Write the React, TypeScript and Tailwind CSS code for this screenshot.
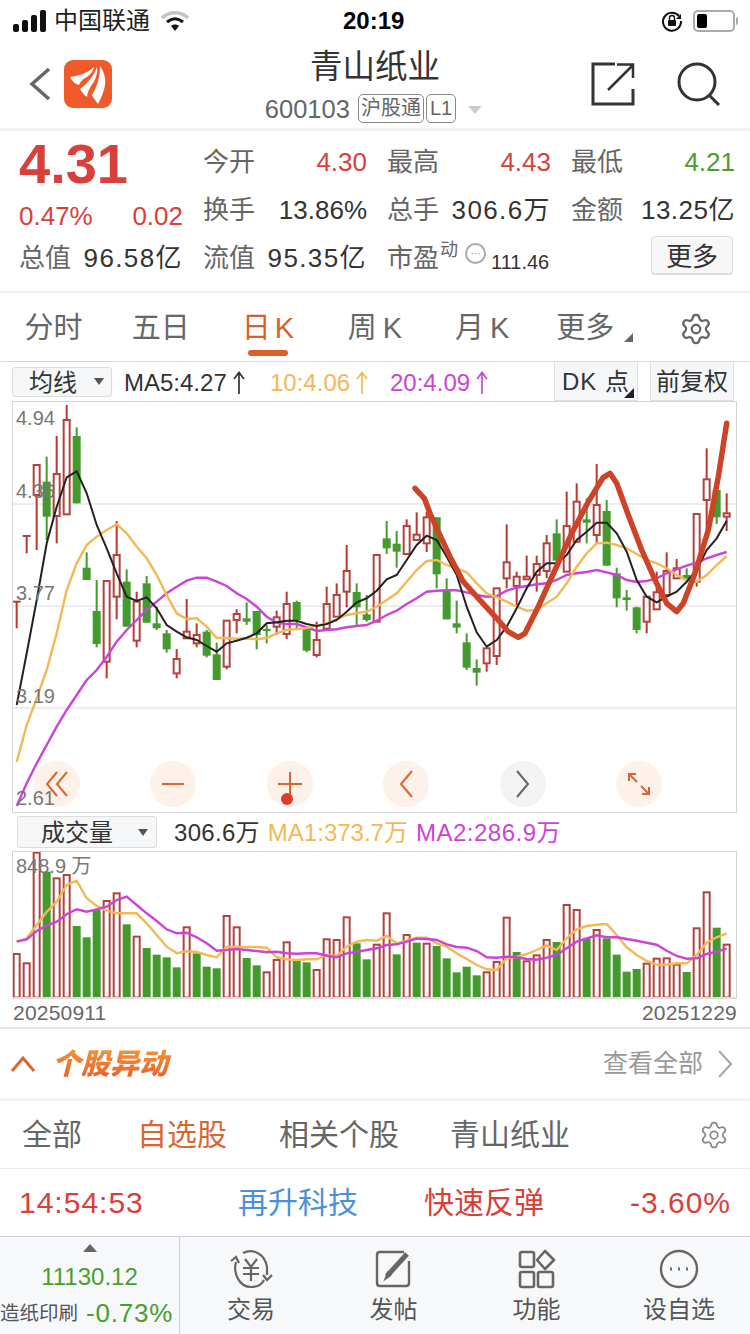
import { Settings } from "lucide-react"

// [green?, wick top, wick bottom, body top, body bottom] - y measured at 3x from y=400
const candles: [number, number, number, number, number][] = [
  [0, 605, 685, 605, 606], [0, 408, 460, 408, 409], [0, 192, 450, 195, 285], [1, 170, 420, 245, 350],
  [0, 108, 430, 222, 348], [0, 15, 345, 60, 343], [1, 82, 310, 108, 310], [1, 457, 540, 503, 540],
  [1, 540, 742, 633, 732], [0, 543, 835, 543, 785], [0, 363, 658, 465, 590], [1, 508, 680, 545, 680],
  [0, 575, 742, 605, 722], [1, 528, 668, 550, 668], [1, 620, 690, 670, 685], [1, 690, 758, 700, 748],
  [0, 747, 835, 777, 820], [0, 597, 715, 695, 715], [0, 670, 742, 705, 730], [1, 690, 772, 695, 767],
  [1, 728, 840, 763, 840], [0, 660, 808, 662, 800], [0, 628, 700, 642, 660], [1, 607, 675, 655, 665],
  [1, 633, 748, 633, 705], [1, 675, 730, 690, 694], [0, 632, 705, 652, 680], [0, 575, 717, 612, 702],
  [1, 602, 685, 606, 660], [1, 680, 757, 682, 752], [0, 665, 772, 720, 765], [0, 560, 690, 612, 686],
  [0, 550, 650, 585, 650], [0, 435, 622, 513, 575], [1, 550, 675, 576, 622], [1, 585, 665, 643, 660],
  [0, 465, 665, 465, 665], [1, 363, 462, 415, 445], [1, 393, 503, 431, 455], [0, 358, 465, 378, 462],
  [0, 337, 423, 404, 420], [0, 335, 456, 352, 430], [1, 352, 565, 352, 523], [1, 535, 658, 570, 658],
  [1, 602, 700, 670, 683], [1, 700, 810, 727, 803], [1, 778, 857, 804, 818], [0, 745, 815, 745, 790],
  [0, 565, 795, 565, 768], [0, 373, 565, 487, 535], [0, 515, 615, 530, 558], [0, 467, 540, 530, 538],
  [0, 467, 575, 492, 525], [0, 405, 535, 430, 513], [1, 358, 490, 400, 482], [0, 275, 515, 378, 515],
  [0, 250, 428, 305, 425], [1, 295, 430, 358, 368], [0, 192, 430, 315, 405], [1, 300, 497, 333, 497],
  [1, 503, 622, 520, 595], [1, 570, 632, 592, 600], [1, 620, 700, 622, 690], [0, 590, 700, 590, 665],
  [0, 515, 630, 577, 628], [0, 457, 590, 513, 585], [0, 477, 535, 505, 535], [1, 505, 545, 525, 540],
  [0, 342, 560, 342, 545], [0, 145, 390, 238, 300], [1, 270, 372, 270, 352], [0, 280, 393, 340, 350],
]

// [green?, top] per day, y at 3x from y=850
const volumes: [number, number][] = [
  [0, 312], [0, 340], [0, 8], [1, 65], [0, 85], [0, 75], [1, 228], [1, 262], [1, 180], [0, 153], [0, 130], [1, 223],
  [0, 260], [1, 294], [1, 314], [1, 322], [1, 352], [0, 232], [1, 310], [1, 350], [1, 355], [0, 198], [0, 232], [1, 324],
  [1, 346], [0, 367], [0, 330], [0, 277], [1, 332], [1, 337], [0, 360], [0, 268], [0, 270], [0, 202], [1, 280], [1, 328],
  [0, 284], [0, 190], [1, 313], [0, 255], [1, 278], [0, 281], [1, 288], [1, 325], [1, 367], [1, 350], [1, 376], [0, 367],
  [0, 336], [0, 203], [1, 306], [0, 334], [0, 316], [0, 270], [1, 276], [0, 165], [0, 180], [1, 265], [0, 240], [1, 265],
  [1, 314], [1, 365], [1, 357], [0, 341], [0, 326], [0, 325], [0, 344], [1, 366], [0, 235], [0, 127], [1, 233], [0, 284],
]

const ma5 = [915, 760, 600, 430, 320, 232, 214, 280, 375, 445, 520, 590, 603, 592, 625, 675, 695, 712, 720, 738, 755, 730, 722, 713, 700, 670, 667, 662, 662, 672, 678, 672, 660, 635, 607, 595, 572, 538, 525, 480, 435, 407, 420, 470, 525, 620, 697, 740, 720, 680, 625, 565, 515, 490, 490, 465, 420, 395, 368, 368, 400, 455, 540, 590, 607, 590, 575, 545, 510, 450, 415, 362]
const ma10 = [1086, 975, 895, 810, 700, 570, 490, 435, 410, 390, 373, 400, 440, 475, 525, 585, 640, 657, 655, 680, 714, 714, 716, 715, 718, 714, 700, 690, 687, 684, 677, 670, 658, 645, 640, 635, 620, 600, 580, 545, 510, 483, 480, 495, 505, 517, 550, 580, 592, 605, 620, 632, 630, 610, 590, 550, 500, 460, 430, 428, 435, 445, 462, 480, 490, 505, 525, 540, 545, 525, 495, 468]
const ma20 = [1218, 1150, 1090, 1035, 980, 930, 885, 840, 810, 770, 725, 690, 660, 630, 605, 580, 560, 542, 533, 533, 545, 558, 580, 597, 620, 650, 668, 672, 672, 682, 693, 690, 688, 682, 678, 675, 662, 645, 632, 612, 595, 575, 572, 571, 571, 577, 585, 590, 588, 572, 563, 558, 553, 550, 540, 525, 520, 516, 510, 517, 525, 540, 546, 543, 535, 520, 508, 497, 488, 475, 465, 456]
const volMa1 = [275, 265, 225, 185, 155, 105, 92, 145, 168, 182, 190, 190, 190, 220, 255, 290, 310, 304, 306, 315, 322, 290, 291, 291, 291, 293, 322, 328, 330, 328, 328, 315, 318, 290, 275, 270, 272, 258, 280, 272, 263, 263, 280, 290, 310, 327, 345, 358, 360, 325, 320, 312, 300, 286, 300, 265, 238, 228, 224, 222, 255, 292, 315, 333, 344, 344, 340, 340, 315, 278, 262, 250]
const volMa2 = [275, 268, 243, 227, 215, 193, 178, 185, 178, 170, 150, 140, 165, 190, 213, 238, 250, 248, 262, 280, 302, 300, 297, 300, 303, 307, 305, 310, 311, 310, 310, 317, 322, 310, 305, 300, 295, 285, 283, 275, 266, 267, 270, 283, 291, 293, 303, 322, 323, 320, 322, 327, 329, 323, 315, 295, 275, 265, 256, 262, 262, 267, 272, 278, 284, 302, 318, 326, 325, 312, 305, 296]

const dayX = (i: number) => 16.67 + i * 10
const line = (ys: number[], top: number) =>
  ys.map((y, i) => `${dayX(i).toFixed(1)},${(top + y / 3).toFixed(1)}`).join(" ")

// the hand drawn stroke over the chart, 3x from (375,400)
const scribble = [[120, 265], [148, 295], [165, 340], [190, 395], [225, 470], [265, 545], [310, 595], [365, 655], [400, 695], [430, 712], [450, 700], [490, 620], [540, 510], [590, 400], [640, 305], [685, 232], [705, 220], [725, 250], [760, 345], [800, 450], [840, 540], [875, 610], [905, 635], [925, 610], [960, 520], [1000, 390], [1030, 230], [1055, 70]]
  .map(([x, y]) => `${(375 + x / 3).toFixed(1)},${(400 + y / 3).toFixed(1)}`)
  .join(" ")

const RED = "#b0433f"
const GREEN = "#459a2e"

const axisLabels = [
  { text: "4.94", pos: "top-[4px]" },
  { text: "4.36", pos: "top-[77px]" },
  { text: "3.77", pos: "top-[179px]" },
  { text: "3.19", pos: "top-[282px]" },
  { text: "2.61", pos: "top-[384px]" },
]

function Chart() {
  return (
    <svg viewBox="13 402 723 410" className="block h-full w-full">
      {[504, 606, 708].map((y) => (
        <line key={y} x1="13" x2="736" y1={y} y2={y} stroke="#e6e6ee" strokeWidth="1.5" />
      ))}
      {candles.map(([green, wt, wb, bt, bb], i) => {
        const x = dayX(i)
        const color = green ? GREEN : RED
        const bodyH = (bb - bt) / 3
        return (
          <g key={i}>
            <line x1={x} x2={x} y1={400 + wt / 3} y2={400 + wb / 3} stroke={green ? GREEN : "#c0342d"} strokeWidth="2" />
            {bodyH < 2 ? (
              <line x1={x - 4} x2={x + 4} y1={400 + bt / 3} y2={400 + bt / 3} stroke={color} strokeWidth="2" />
            ) : (
              <rect
                x={green ? x - 4 : x - 3}
                y={400 + bt / 3}
                width={green ? 8 : 6}
                height={bodyH}
                fill={green ? GREEN : "#ffffff"}
                stroke={green ? "none" : color}
                strokeWidth="2"
              />
            )}
          </g>
        )
      })}
      <polyline points={line(ma20, 400)} fill="none" stroke="#cc44d6" strokeWidth="2.4" />
      <polyline points={line(ma10, 400)} fill="none" stroke="#f2b955" strokeWidth="2.4" />
      <polyline points={line(ma5, 400)} fill="none" stroke="#222222" strokeWidth="2" />
      <polyline points={scribble} fill="none" stroke="#cd4326" strokeWidth="5.5" strokeLinecap="round" strokeLinejoin="round" />
    </svg>
  )
}

function VolumeChart() {
  const base = 997.5
  return (
    <svg viewBox="13 852 723 145" className="block h-full w-full">
      {volumes.map(([green, top], i) => {
        const x = dayX(i)
        const y = 850 + top / 3
        return green ? (
          <rect key={i} x={x - 4} y={y} width="8" height={base - y} fill={GREEN} />
        ) : (
          <rect key={i} x={x - 3} y={y} width="6" height={base - y} fill="#ffffff" stroke={RED} strokeWidth="2" />
        )
      })}
      <polyline points={line(volMa1, 850)} fill="none" stroke="#f2b955" strokeWidth="2.4" />
      <polyline points={line(volMa2, 850)} fill="none" stroke="#cc44d6" strokeWidth="2.4" />
      <text x="16" y="873" fontSize="20" fill="#777777">848.9 万</text>
    </svg>
  )
}

function Stat({ label, value, color = "text-[#333]" }: { label: string; value: string; color?: string }) {
  return (
    <div className="flex items-center justify-between">
      <span className="text-[#666]">{label}</span>
      <span className={color}>{value}</span>
    </div>
  )
}

function ChartButton({ grey, children }: { grey?: boolean; children: React.ReactNode }) {
  return (
    <div className="flex w-[116.5px] justify-center">
      <div className={`relative flex h-[46px] w-[46px] items-center justify-center rounded-full ${grey ? "bg-[#f3f3f3]" : "bg-[#fdf1ea]"}`}>
        {children}
      </div>
    </div>
  )
}

function UpArrow({ color }: { color: string }) {
  return (
    <svg className="ml-[6px]" width="12" height="24" viewBox="0 0 12 24" fill="none" stroke={color} strokeWidth="1.7">
      <path d="M6 2 V23 M1 8 L6 1.5 L11 8" />
    </svg>
  )
}

const ctl = { fill: "none", stroke: "#d9662f", strokeWidth: 2 }

export default function App() {
  return (
    <div className="flex h-[1334px] w-[750px] flex-col overflow-hidden bg-white font-['Liberation_Sans','Noto_Sans_CJK_SC',sans-serif] text-[#333]">
      {/* status bar */}
      <div className="relative flex h-[42px] items-center pl-[13px] pr-[12px] text-black">
        <svg width="34" height="22" viewBox="0 0 34 22" fill="#111">
          <rect x="0" y="14" width="6" height="8" rx="2" />
          <rect x="9" y="10" width="6" height="12" rx="2" />
          <rect x="18" y="5" width="6" height="17" rx="2" />
          <rect x="27" y="0" width="6" height="22" rx="2" />
        </svg>
        <span className="ml-[7px] text-[24px] leading-none text-[#222]">中国联通</span>
        <svg className="ml-[11px]" width="28" height="22" viewBox="0 0 28 22" fill="none">
          <path d="M1 8 C8 1 20 1 27 8" stroke="#c4c4c4" strokeWidth="3.5" />
          <path d="M6 12 C11 8 17 8 22 12" stroke="#111" strokeWidth="3" />
          <path d="M10 16 L14 21 L18 16 C16 14 12 14 10 16Z" fill="#111" />
        </svg>
        <span className="absolute left-[343px] text-[24px] font-bold leading-none">20:19</span>
        <div className="ml-auto flex items-center gap-[10px]">
          <svg width="22" height="22" viewBox="0 0 22 22" fill="none">
            <path d="M18 6 A9 9 0 1 0 20 11" stroke="#111" strokeWidth="2" />
            <path d="M20 4 V9 H15" fill="#111" />
            <rect x="7" y="10" width="8" height="6" rx="1" fill="#111" />
            <path d="M8.5 10 V8 A2.5 2.5 0 0 1 13.5 8 V10" stroke="#111" strokeWidth="1.4" />
          </svg>
          <div className="flex items-center">
            <div className="flex h-[22px] w-[42px] items-center rounded-[5px] border-2 border-[#aaa] p-[2px]">
              <div className="h-full w-[10px] rounded-[2px] bg-black" />
            </div>
            <div className="ml-[1px] h-[8px] w-[2px] rounded-r bg-[#aaa]" />
          </div>
        </div>
      </div>

      {/* nav */}
      <div className="flex h-[86px] items-start">
        <div className="flex w-[165px] items-center pl-[29px] pt-[18px]">
          <svg width="22" height="34" viewBox="0 0 22 34" fill="none">
            <path d="M20 2 L3 17 L20 32" stroke="#666" strokeWidth="3.5" />
          </svg>
          <svg className="ml-[13px]" width="48" height="48" viewBox="0 0 48 48">
            <rect width="48" height="48" rx="9" fill="#ee5a2a" />
            <path d="M6 17 C14 16 24 13 30 7 C29 12 25 16 21 18 C18 20 16 22 15 25 C11 24 8 21 6 17Z" fill="#fff" />
            <path d="M33 7 C34 14 31 21 27 26 C25 30 23 33 23 37 C20 35 17 31 16 29 C23 24 30 16 33 7Z" fill="#fff" />
            <path d="M36 6 C40 12 42 18 41 25 C40 32 37 38 34 44 C32 41 29 38 28 35 C33 27 36 17 36 6Z" fill="#fff" />
          </svg>
        </div>
        <div className="flex flex-1 flex-col items-center pt-[5px]">
          <div className="text-[32.5px] leading-[40px] text-[#333]">青山纸业</div>
          <div className="mr-[3px] mt-[7px] flex items-center text-[#666]">
            <span className="text-[25.5px] leading-[28px]">600103</span>
            <span className="ml-[8px] rounded-[5px] border border-[#888] px-[2px] text-[20px] leading-[27px]">沪股通</span>
            <span className="ml-[2px] rounded-[5px] border border-[#888] px-[3px] text-[20px] leading-[27px]">L1</span>
            <span className="ml-[12px] mt-[3px] h-0 w-0 border-x-[7px] border-t-[8px] border-x-transparent border-t-[#ccc]" />
          </div>
        </div>
        <div className="flex w-[165px] items-center justify-end gap-[42px] pr-[29px] pt-[20px]">
          <svg width="44" height="44" viewBox="0 0 44 44" fill="none" stroke="#333" strokeWidth="3">
            <path d="M42 27 V42 H2 V2 H24" />
            <path d="M17 28 L41 4 M26 2.5 H42 V16" strokeWidth="2.5" />
          </svg>
          <svg width="44" height="44" viewBox="0 0 44 44" fill="none" stroke="#333" strokeWidth="3">
            <circle cx="20" cy="20" r="18" />
            <path d="M32 33 L42 43" />
          </svg>
        </div>
      </div>
      <div className="h-[3px] bg-[#f2f2f2]" />

      {/* quote */}
      <div className="grid h-[160px] grid-cols-[164px_164px_164px_164px] grid-rows-[58px_48px_48px] gap-x-[20px] px-[19px] text-[26px] leading-[34px]">
        <div className="text-[56px] font-bold leading-[66px] text-[#d9403a]">4.31</div>
        <div className="pt-[14px]"><Stat label="今开" value="4.30" color="text-[#d9403a]" /></div>
        <div className="pt-[14px]"><Stat label="最高" value="4.43" color="text-[#d9403a]" /></div>
        <div className="pt-[14px]"><Stat label="最低" value="4.21" color="text-[#4a9e2e]" /></div>
        <div className="flex justify-between pt-[10px] text-[#d9403a]">
          <span>0.47%</span>
          <span>0.02</span>
        </div>
        <div className="pt-[4px]"><Stat label="换手" value="13.86%" /></div>
        <div className="pt-[4px]"><Stat label="总手" value="306.6万" color="text-[#333] tracking-[1.4px]" /></div>
        <div className="pt-[4px]"><Stat label="金额" value="13.25亿" color="text-[#333] tracking-[0.5px]" /></div>
        <div className="pt-[4px]"><Stat label="总值" value="96.58亿" color="text-[#333] tracking-[1.4px]" /></div>
        <div className="pt-[4px]"><Stat label="流值" value="95.35亿" color="text-[#333] tracking-[1.4px]" /></div>
        <div className="flex items-start whitespace-nowrap pt-[4px]">
          <span className="shrink-0 text-[#666]">市盈</span>
          <span className="ml-[1px] shrink-0 -translate-y-[3px] text-[18px] leading-[24px] text-[#666]">动</span>
          <span className="ml-[7px] mt-[2px] flex h-[21px] w-[21px] shrink-0 items-center justify-center rounded-full border-2 border-[#aaa] text-[10px] leading-none text-[#888]">···</span>
          <span className="ml-[5px] mt-[7px] shrink-0 text-[20px] leading-[28px]">111.46</span>
        </div>
        <div className="flex justify-end pr-[2px]">
          <span className="-mt-[1px] flex h-[38px] w-[82px] items-center justify-center rounded-[4px] border border-[#ddd] bg-[#f7f7f8] pt-[3px] text-[26px] shadow-[0_1px_0_#ddd]">更多</span>
        </div>
      </div>
      <div className="h-[2px] bg-[#efefef]" />

      {/* period tabs */}
      <div className="grid h-[69px] grid-cols-7 border-b border-[#d8d8d8] pt-[3px] text-[29px] text-[#666]">
        <div className="flex items-center justify-center">分时</div>
        <div className="flex items-center justify-center">五日</div>
        <div className="relative flex items-center justify-center text-[#d9602a]">
          日<span className="ml-[4px]">K</span>
          <span className="absolute bottom-[5px] left-[34px] h-[6px] w-[40px] rounded-full bg-[#d9602a]" />
        </div>
        <div className="flex items-center justify-center">周<span className="ml-[6px]">K</span></div>
        <div className="flex items-center justify-center">月<span className="ml-[6px]">K</span></div>
        <div className="relative flex items-center justify-center pr-[8px]">
          更多
          <span className="absolute bottom-[19px] right-[10px] h-0 w-0 border-b-[9px] border-l-[9px] border-b-[#666] border-l-transparent" />
        </div>
        <div className="flex items-center justify-center">
          <Settings size={34} strokeWidth={1.6} color="#666" />
        </div>
      </div>

      {/* MA legend */}
      <div className="flex h-[39px] items-center pl-[12px] text-[24px]">
        <div className="flex h-[30px] w-[100px] items-center justify-between rounded-[3px] border border-[#ddd] bg-[#f6f7f9] pl-[16px] pr-[7px]">
          <span className="pt-[2px]">均线</span>
          <span className="h-0 w-0 border-x-[5px] border-t-[7px] border-x-transparent border-t-[#555]" />
        </div>
        <span className="ml-[12px] flex w-[146px] items-center pt-[2px]">MA5:4.27<UpArrow color="#333" /></span>
        <span className="flex w-[120px] items-center pt-[2px] text-[#f2b955]">10:4.06<UpArrow color="#f2b955" /></span>
        <span className="flex items-center pt-[2px] text-[#cc44d6]">20:4.09<UpArrow color="#cc44d6" /></span>
        <div className="ml-auto flex gap-[12px] self-start pr-[16px]">
          <span className="relative flex h-[39px] w-[84px] items-center justify-center border border-t-0 border-[#ddd] bg-[#f6f7f9] pt-[2px] tracking-[1px]">
            DK 点
            <span className="absolute bottom-[2px] right-[3px] h-0 w-0 border-b-[10px] border-l-[10px] border-b-[#222] border-l-transparent" />
          </span>
          <span className="flex h-[39px] w-[84px] items-center justify-center border border-t-0 border-[#ddd] bg-[#f6f7f9] pt-[2px]">前复权</span>
        </div>
      </div>

      {/* candle chart */}
      <div className="relative ml-[12px] h-[412px] w-[725px] border border-[#d4d4d4]">
        <Chart />
        <div className="absolute bottom-[5px] left-[-14.5px] flex">
          <ChartButton>
            <svg width="24" height="28" viewBox="0 0 24 28" {...ctl}><path d="M12 2 L2 14 L12 26 M22 2 L12 14 L22 26" /></svg>
          </ChartButton>
          <ChartButton>
            <svg width="24" height="4" viewBox="0 0 24 4" {...ctl}><path d="M1 2 H23" /></svg>
          </ChartButton>
          <ChartButton>
            <svg width="24" height="24" viewBox="0 0 24 24" {...ctl}><path d="M0 12 H24 M12 0 V24" /></svg>
            <span className="absolute bottom-[2px] left-[14px] h-[12px] w-[12px] rounded-full bg-[#e03b2e]" />
          </ChartButton>
          <ChartButton>
            <svg width="14" height="28" viewBox="0 0 14 28" {...ctl}><path d="M13 1 L2 14 L13 27" /></svg>
          </ChartButton>
          <ChartButton grey>
            <svg width="14" height="28" viewBox="0 0 14 28" fill="none" stroke="#666" strokeWidth="2"><path d="M1 1 L12 14 L1 27" /></svg>
          </ChartButton>
          <ChartButton>
            <svg width="24" height="24" viewBox="0 0 24 24" {...ctl}><path d="M2 9 V2 H9 M2 2 L10 10 M22 15 V22 H15 M22 22 L14 14" /></svg>
          </ChartButton>
        </div>
        {axisLabels.map((l) => (
          <span key={l.text} className={`absolute left-[3px] text-[20px] leading-[24px] text-[#777] ${l.pos}`}>
            {l.text}
          </span>
        ))}
      </div>

      {/* volume legend */}
      <div className="flex h-[38px] items-center pl-[17px] text-[24px]">
        <div className="flex h-[32px] w-[140px] items-center justify-between rounded-[3px] border border-[#ddd] bg-[#f6f7f9] pl-[23px] pr-[8px]">
          <span className="pt-[2px]">成交量</span>
          <span className="h-0 w-0 border-x-[5px] border-t-[7px] border-x-transparent border-t-[#555]" />
        </div>
        <span className="ml-[17px] pt-[2px] tracking-[0.3px]">306.6万</span>
        <span className="ml-[8px] pt-[2px] text-[#f2b955]">MA1:373.7万</span>
        <span className="ml-[8px] pt-[2px] tracking-[0.5px] text-[#cc44d6]">MA2:286.9万</span>
      </div>

      {/* volume chart */}
      <div className="ml-[12px] h-[148px] w-[725px] border border-b-[2px] border-[#d4d4d4] border-b-[#ddd]">
        <VolumeChart />
      </div>
      <div className="flex h-[30px] items-center justify-between border-b-2 border-[#e4e4e4] pl-[13px] pr-[13px] text-[21px] tracking-[0.2px] text-[#666]">
        <span>20250911</span>
        <span>20251229</span>
      </div>

      {/* movement header */}
      <div className="flex h-[69px] items-center pl-[10px] pr-[17px]">
        <svg width="26" height="18" viewBox="0 0 26 18" fill="none" stroke="#d9662f" strokeWidth="3"><path d="M2 16 L13 3 L24 16" /></svg>
        <span className="ml-[16px] bg-gradient-to-b from-[#f59a3a] to-[#e2582a] bg-clip-text pr-[6px] text-[29px] font-black italic leading-[38px] text-transparent">个股异动</span>
        <span className="ml-auto text-[25px] text-[#999]">查看全部</span>
        <svg className="ml-[15px]" width="15" height="30" viewBox="0 0 15 30" fill="none" stroke="#aaa" strokeWidth="2.2"><path d="M1 2 L13 15 L1 28" /></svg>
      </div>
      <div className="h-[3px] bg-[#f2f2f2]" />

      <div className="flex h-[68px] items-center border-b border-[#eee] pl-[22px] pr-[21px] text-[30px] text-[#666]">
        <span>全部</span>
        <span className="ml-[55px] text-[#d9662f]">自选股</span>
        <span className="ml-[52px]">相关个股</span>
        <span className="ml-[51px]">青山纸业</span>
        <Settings className="ml-auto" size={30} strokeWidth={1.4} color="#888" />
      </div>

      <div className="flex h-[67px] items-center pl-[19px] pr-[19px] text-[30px] text-[#d9403a]">
        <span className="w-[219px] tracking-[1px]">14:54:53</span>
        <span className="w-[186px] text-[#4a90d9]">再升科技</span>
        <span>快速反弹</span>
        <span className="ml-auto tracking-[1px]">-3.60%</span>
      </div>

      {/* bottom bar */}
      <div className="flex flex-1 border-t border-[#ccced4] bg-[#f7f8fa] text-[#555]">
        <div className="flex w-[180px] flex-col items-center border-r border-[#ccced4] pt-[7px]">
          <span className="h-0 w-0 border-x-[7px] border-b-[8px] border-x-transparent border-b-[#666]" />
          <span className="mt-[9px] text-[24px] leading-[32px] text-[#4a9e2e]">11130.12</span>
          <div className="mt-[4px] flex w-full items-center whitespace-nowrap leading-[32px]">
            <span className="text-[19.5px] text-[#555]">造纸印刷</span>
            <span className="ml-[8px] text-[26px] tracking-[0.8px] text-[#4a9e2e]">-0.73%</span>
          </div>
        </div>
        <div className="flex flex-1 pt-[12px] text-[24px] leading-[32px]">
          <div className="flex w-[142px] flex-col items-center">
            <svg width="44" height="40" viewBox="0 0 44 40" fill="none" stroke="#666" strokeWidth="2.2">
              <path d="M7 13 C4 24 10 38 22 38 C28 38 33 35 35 31" />
              <path d="M14 4 C24 -1 36 5 38 18 L38 26" />
              <path d="M2 12 L7 8 L10 14 M34 26 L38 31 L43 26" />
              <path d="M16 10 L22 18 L28 10 M14 19 H30 M14 25 H30 M22 18 V32" />
            </svg>
            <span className="mt-[5px]">交易</span>
          </div>
          <div className="flex w-[143px] flex-col items-center">
            <svg width="40" height="40" viewBox="0 0 40 40" fill="none" stroke="#666" strokeWidth="2.4">
              <path d="M30 3 H6 Q3 3 3 6 V34 Q3 37 6 37 H32 Q35 37 35 34 V12" />
              <path d="M13 27 L33 5" strokeWidth="5" />
              <path d="M12 29 L14 24 L16 26Z" fill="#666" />
            </svg>
            <span className="mt-[5px]">发帖</span>
          </div>
          <div className="flex w-[143px] flex-col items-center">
            <svg width="38" height="40" viewBox="0 0 38 40" fill="none" stroke="#666" strokeWidth="2.6">
              <rect x="2" y="3" width="14" height="15" rx="2" />
              <rect x="2" y="23" width="14" height="15" rx="2" />
              <rect x="20" y="23" width="15" height="15" rx="2" />
              <path d="M27 2 L36 11 L27 20 L19 11Z" strokeLinejoin="round" />
            </svg>
            <span className="mt-[5px]">功能</span>
          </div>
          <div className="flex flex-1 flex-col items-center">
            <svg width="40" height="40" viewBox="0 0 40 40" fill="none" stroke="#666" strokeWidth="2.4">
              <circle cx="20" cy="20" r="18" />
              <path d="M11 20 h2 M19 20 h2 M27 20 h2" strokeWidth="3" />
            </svg>
            <span className="mt-[5px]">设自选</span>
          </div>
        </div>
      </div>
    </div>
  )
}
